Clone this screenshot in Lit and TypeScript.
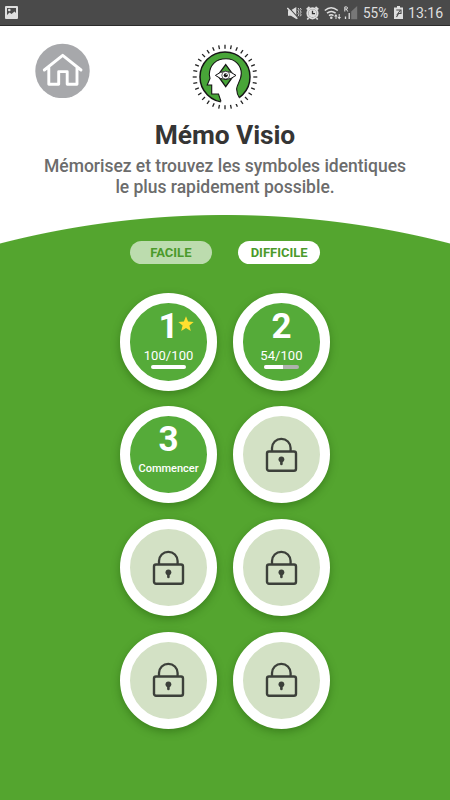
import { LitElement, html, svg, css } from "lit";
import { customElement, property } from "lit/decorators.js";

const TICKS = Array.from({ length: 32 }, (_, i) => i * 11.25);

@customElement("status-bar")
class StatusBar extends LitElement {
  static styles = css`
    :host { display: flex; align-items: center; height: 26px; box-sizing: border-box; padding: 0 6px 0 5px; background: #4a4a4a; border-bottom: 1px solid #2b2b2b; color: #dedede; font: 400 15px Roboto, sans-serif; }
    svg { display: block; flex: none; }
    .gap { flex: 1; }
    .mute { margin-right: 4px; }
    .alarm { margin-right: 5px; }
    .wifi { margin-right: 2px; }
    .signal { margin-right: 5px; }
    .pct { width: 27px; white-space: nowrap; transform: scaleX(0.9); transform-origin: left; }
    .battery { margin: 0 5px 0 4px; }
    .time { width: 36px; white-space: nowrap; transform: scaleX(0.94); transform-origin: left; }
  `;
  render() {
    return html`
      <svg width="13" height="13" viewBox="0 0 13 13"><path fill="#dedede" fill-rule="evenodd" d="M1 0H12Q13 0 13 1V12Q13 13 12 13H1Q0 13 0 12V1Q0 0 1 0ZM2 2V9L4.5 6.5L6.5 8L9.5 5.5L11 7V2Z"/><circle cx="4.3" cy="4" r="1.3" fill="#dedede"/></svg>
      <div class="gap"></div>
      <svg class="mute" width="15" height="14" viewBox="0 0 15 14"><path fill="#dedede" d="M1 4.2H4L9.3 1V13L4 9.8H1Z"/><path d="M1.3 1.2L11 11.6" stroke="#4a4a4a" stroke-width="1.2"/><path d="M.3 2L10.3 12.8" stroke="#dedede" stroke-width="1.5"/><path d="M11 2l1 1.3-1 1.4 1 1.4-1 1.4 1 1.4-1 1.4M13.2 2l1 1.3-1 1.4 1 1.4-1 1.4 1 1.4-1 1.4" fill="none" stroke="#dedede" stroke-width=".9"/></svg>
      <svg class="alarm" width="13" height="14" viewBox="0 0 13 14"><circle cx="6.5" cy="7.3" r="5.1" fill="none" stroke="#dedede" stroke-width="2"/><circle cx="6.5" cy="7.3" r="4" fill="#dedede"/><path d="M.7 3.5L3.5 1M12.3 3.5L9.5 1M2.5 12L1.3 13.5M10.5 12L11.7 13.5" stroke="#dedede" stroke-width="1.7"/><path d="M6.5 4.7V7.6H9" fill="none" stroke="#333" stroke-width="1.3"/></svg>
      <svg class="wifi" width="18" height="14" viewBox="0 0 18 14"><g fill="none" stroke="#dedede" stroke-width="1.5"><path d="M.8 4.5Q7 -1 13.8 4.5M3 7.2Q7.2 3.7 11.6 7.2M5 9.7Q7.2 8 9.5 9.7"/></g><circle cx="7.3" cy="11.8" r="1.3" fill="#dedede"/><path d="M10 10.5L12 8L13.6 10.5ZM13.5 11L15.2 13.5L17 11Z" fill="#dedede"/><path d="M12 10V13M15.2 8V11" stroke="#dedede"/></svg>
      <svg class="signal" width="14" height="14" viewBox="0 0 14 14"><path d="M.8 5.5V.9H2.5Q3.5 1 3.5 2T2.5 3H1M2.3 3L3.7 5.5" fill="none" stroke="#dedede"/><path d="M1.5 13V10.5M5.2 13V7" stroke="#dedede" stroke-width="1.3"/><path d="M7.2 13.2V5.5L13.2 0V13.2Z" fill="#777"/></svg>
      <span class="pct">55%</span>
      <svg class="battery" width="9" height="13" viewBox="0 0 9 13"><path fill="#dedede" d="M3 0H6V1.5H9V13H0V1.5H3Z"/><path d="M2.3 4H7V7.5H4.5L2.5 11" fill="none" stroke="#4a4a4a" stroke-width="1.1"/><path d="M6.5 4L2.8 9" stroke="#4a4a4a"/></svg>
      <span class="time">13:16</span>`;
  }
}

@customElement("level-badge")
class LevelBadge extends LitElement {
  @property() number = "";
  @property() label = "";
  @property({ type: Number }) progress = -1;
  @property({ type: Boolean }) star = false;
  @property({ type: Boolean }) locked = false;
  static styles = css`
    :host { display: block; font-family: Roboto, sans-serif; }
    .ring { width: 97.5px; height: 97.5px; box-sizing: border-box; border: 10.2px solid #fff; border-radius: 50%; background: #55ab39; box-shadow: 0 3px 8px rgba(20, 70, 0, 0.38); color: #fff; display: flex; flex-direction: column; align-items: center; position: relative; }
    .locked { background: #d3e1c5; justify-content: center; }
    .num { font-weight: 700; font-size: 35px; line-height: 36px; margin-top: 6px; }
    .score { font-size: 13px; line-height: 14px; margin-top: 4px; letter-spacing: 0.08px; }
    .start { font-size: 11px; line-height: 14px; margin-top: 4px; font-weight: 500; }
    .track { width: 35px; height: 4.4px; border-radius: 3px; background: #aeb3ac; overflow: hidden; margin-top: 1.5px; }
    .fill { height: 100%; background: #fff; }
    .star { position: absolute; left: 48.5px; top: 13px; }
    svg { display: block; }
  `;
  render() {
    if (this.locked)
      return html`<div class="ring locked"><svg width="33" height="36" viewBox="0 0 33 36"><rect x="2" y="14.5" width="29" height="19.2" rx="2" fill="none" stroke="#3c403a" stroke-width="2.4"/><path d="M7 14.5V11.1A9.3 9.3 0 0 1 25.6 11.1V14.5" fill="none" stroke="#3c403a" stroke-width="2.3"/><circle cx="16.4" cy="22.3" r="2.9" fill="#3c403a"/><path d="M16.4 23V27" stroke="#3c403a" stroke-width="2.6" stroke-linecap="round"/></svg></div>`;
    return html`<div class="ring">
      <div class="num">${this.number}</div>
      ${this.star ? html`<svg class="star" width="16" height="16" viewBox="0 0 16 16"><path fill="#ffe02f" d="M8 .3L10.1 5.5L15.7 5.9L11.4 9.5L12.8 15L8 12L3.2 15L4.6 9.5L.3 5.9L5.9 5.5Z"/></svg>` : ""}
      <div class=${this.progress >= 0 ? "score" : "start"}>${this.label}</div>
      ${this.progress >= 0 ? html`<div class="track"><div class="fill" style="width:${this.progress}%"></div></div>` : ""}
    </div>`;
  }
}

@customElement("app-root")
class AppRoot extends LitElement {
  static styles = css`
    :host { display: block; width: 450px; height: 800px; overflow: hidden; background: #fff; font-family: Roboto, sans-serif; }
    svg { display: block; }
    .header { height: 189px; position: relative; text-align: center; }
    .home { position: absolute; left: 35px; top: 17px; }
    .logo { margin: 0 auto; padding-top: 16px; width: 70px; }
    h1 { margin: 7px 0 0; font-size: 26.4px; line-height: 32px; font-weight: 700; color: #353535; letter-spacing: -0.1px; }
    p { margin: 5px 0 0; font-size: 17.5px; line-height: 20.5px; font-weight: 500; color: #6c6c6c; letter-spacing: -0.02px; white-space: nowrap; }
    .board { height: 585px; overflow: hidden; background: radial-gradient(circle 902px at 225px 902px, #54a52f 901.5px, #fff 902.5px); }
    .tabs { display: flex; justify-content: center; gap: 26px; padding-top: 26px; }
    .tab { width: 82.3px; height: 23px; border-radius: 12px; background: #fff; color: #4b9a2b; font-weight: 700; font-size: 13px; line-height: 24px; text-align: center; }
    .dim { background: #bcdcae; }
    .levels { display: grid; grid-template-columns: 97.5px 97.5px; gap: 15.4px; justify-content: center; margin-top: 29px; }
  `;
  render() {
    return html`
      <status-bar></status-bar>
      <div class="header">
        <svg class="home" width="55" height="55" viewBox="0 0 55 55"><circle cx="27.5" cy="28" r="27.2" fill="#a7a8ab"/><path d="M9.3 27L27.7 12.3L46 27M13.8 24V41.2H23.7V28.6H32.2V41.2H42V24" fill="none" stroke="#fff" stroke-width="2.9" stroke-linecap="round" stroke-linejoin="round"/></svg>
        <svg class="logo" width="70" height="70" viewBox="-35 -35 70 70">
          ${TICKS.map((a) => svg`<path d="M0 -28.3V-32.3" transform="rotate(${a})" stroke="#222" stroke-width="1.3"/>`)}
          <circle r="25" fill="#48a538" stroke="#151515" stroke-width="1.5"/>
          <path d="M-3.5 27L-6.5 17H-13.3V8H-17.8L-15 1.5L-15.7 -2.5C-15.5 -12 -9 -18.3 1 -18.3C11 -18.3 16.3 -11 16.3 -3.5C16.3 3 11.8 7.5 11.6 12Q11.8 17 14.4 20.8V27Z" fill="#fff"/>
          <path d="M-4 24.5L-6.5 17H-13.3V8H-17.8L-15 1.5L-15.7 -2.5C-15.5 -12 -9 -18.3 1 -18.3C11 -18.3 16.3 -11 16.3 -3.5C16.3 3 11.8 7.5 11.6 12Q11.8 17 14.4 20.8" fill="none" stroke="#151515" stroke-width="1.1"/>
          <path d="M.7 -12.3L8.7 -1.6L.7 9.6L-7.3 -1.6Z" fill="#48a538" stroke="#151515" stroke-width="1.3"/>
          <path d="M-9.6 -1.6Q.7 -9.8 11 -1.6Q.7 6.6 -9.6 -1.6Z" fill="#fff" stroke="#151515" stroke-width="1"/>
          <circle cx=".7" cy="-1.8" r="3.9" fill="#fff" stroke="#151515" stroke-width=".7"/><circle cx=".7" cy="-1.8" r="2" fill="#151515"/><circle cx="1.3" cy="-2.5" r=".6" fill="#fff"/>
        </svg>
        <h1>Mémo Visio</h1>
        <p>Mémorisez et trouvez les symboles identiques<br />le plus rapidement possible.</p>
      </div>
      <div class="board">
        <div class="tabs"><div class="tab dim">FACILE</div><div class="tab">DIFFICILE</div></div>
        <div class="levels">
          <level-badge number="1" label="100/100" progress="100" star></level-badge>
          <level-badge number="2" label="54/100" progress="54"></level-badge>
          <level-badge number="3" label="Commencer"></level-badge>
          ${[0, 1, 2, 3, 4].map(() => html`<level-badge locked></level-badge>`)}
        </div>
      </div>`;
  }
}
